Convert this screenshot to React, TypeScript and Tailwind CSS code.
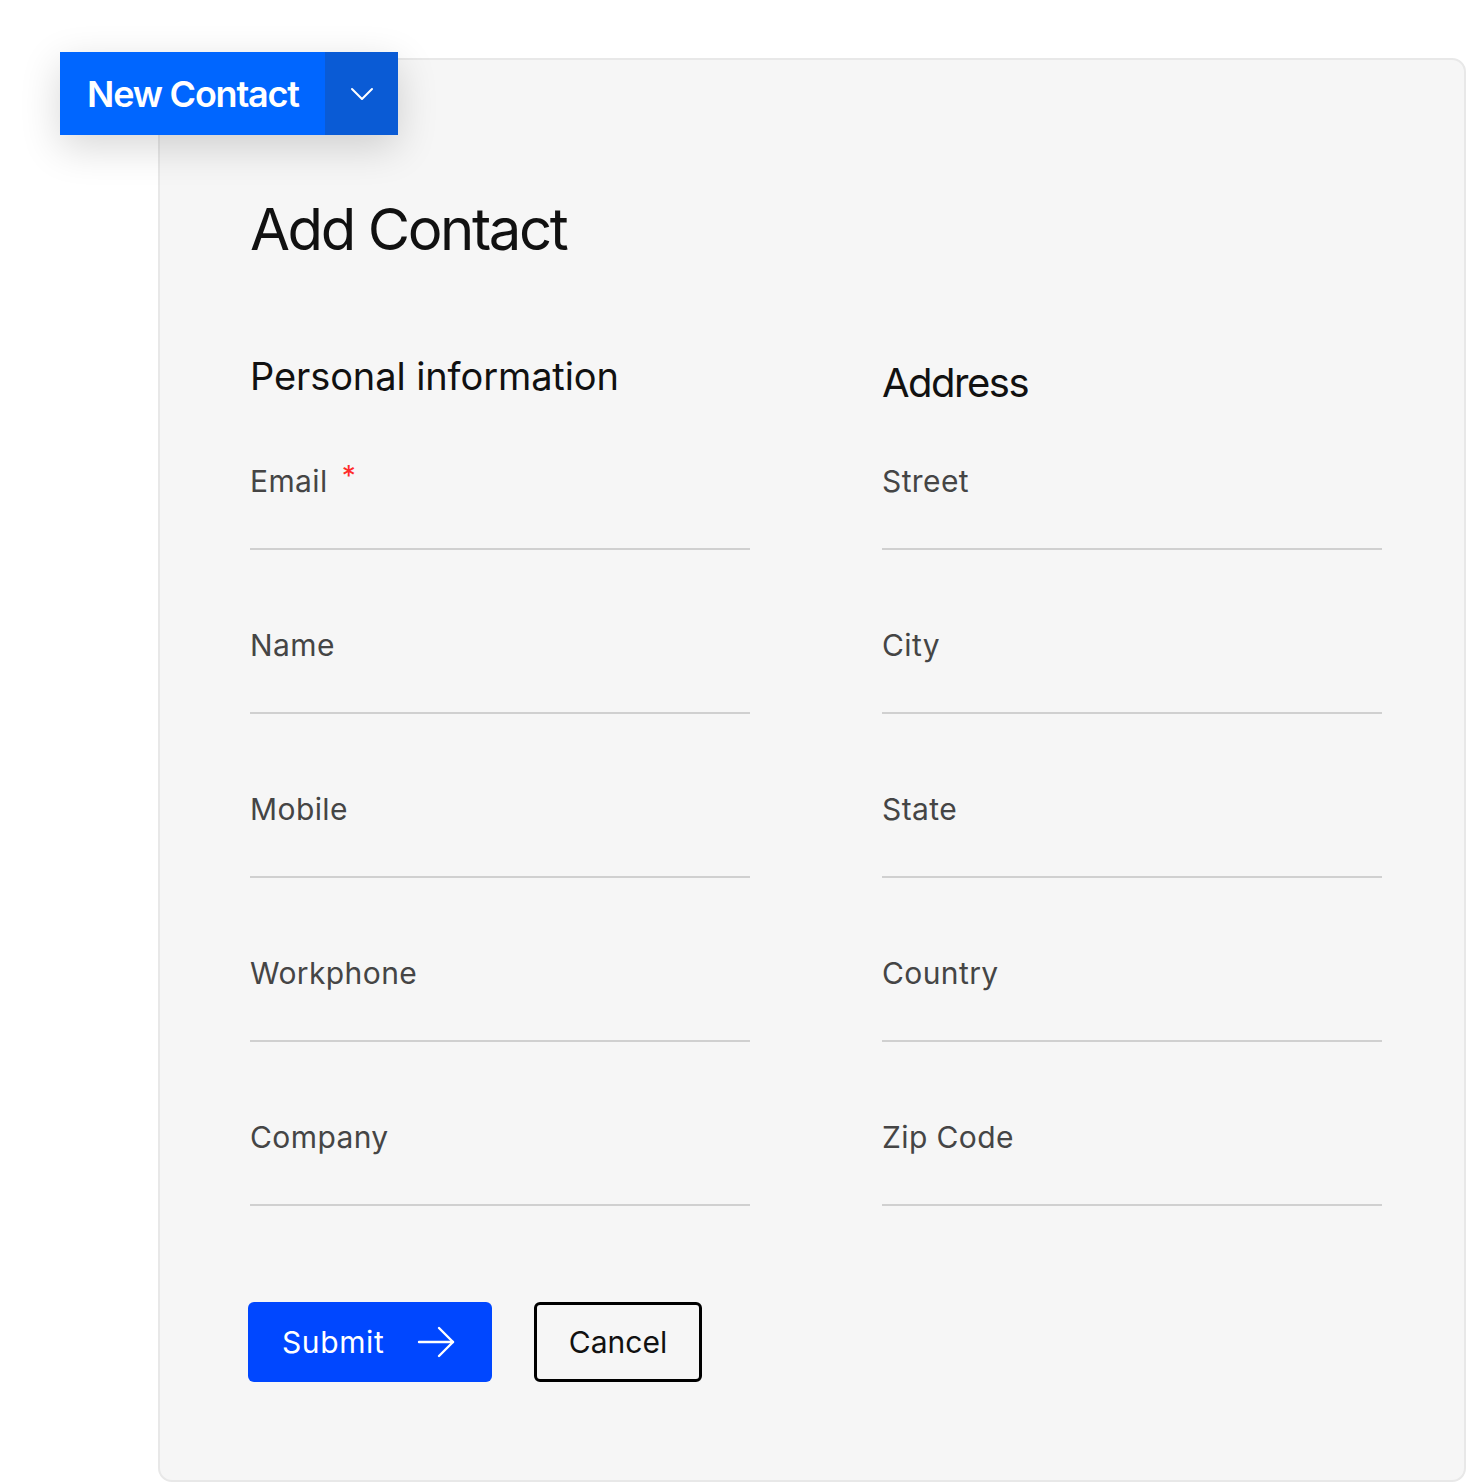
import { ChevronDown } from "lucide-react";

const personal = ["Email", "Name", "Mobile", "Workphone", "Company"];
const address = ["Street", "City", "State", "Country", "Zip Code"];

function Field({ label, required }: { label: string; required?: boolean }) {
  return (
    <div className="flex flex-col">
      <div className="mb-[49px] flex h-[36px] items-start text-[30px] leading-[36px] tracking-[0.4px] text-[#454545]">
        <span>{label}</span>
        {required && <span className="ml-[14px] text-[28px] leading-[26px] text-[#ff2b2b]">*</span>}
      </div>
      <div className="h-[2px] w-full bg-[#d0d0d0]" />
    </div>
  );
}

export default function App() {
  return (
    <div
      className="relative h-[1482px] w-[1466px] overflow-hidden bg-white"
      style={{ fontFamily: "Inter, 'Noto Sans', sans-serif" }}
    >
      <div className="ml-[158px] mt-[58px] h-[1424px] w-[1308px] rounded-[14px] border-2 border-[#e8e8e8] bg-[#f6f6f6] pl-[90px] pt-[134px]">
        <h1 className="text-[58px] leading-[70px] font-normal tracking-[-2.4px] text-[#111]">Add Contact</h1>

        <div className="mt-[89px] grid w-[1132px] grid-cols-2 gap-x-[132px]">
          <div className="flex flex-col">
            <h2 className="mb-[64px] text-[38px] leading-[46px] tracking-[-0.1px] text-[#111]">Personal information</h2>
            <div className="flex flex-col gap-[77px]">
              {personal.map((p, i) => (
                <Field key={p} label={p} required={i === 0} />
              ))}
            </div>
          </div>
          <div className="flex flex-col">
            <h2 className="mb-[56px] mt-[6px] text-[40px] leading-[48px] tracking-[-1.5px] text-[#111]">Address</h2>
            <div className="flex flex-col gap-[77px]">
              {address.map((a) => (
                <Field key={a} label={a} />
              ))}
            </div>
          </div>
        </div>

        <div className="-ml-[2px] mt-[96px] flex items-center gap-[42px]">
          <button className="flex h-[80px] w-[244px] items-center rounded-[6px] bg-[#0047ff] pl-[34px] text-[30px] tracking-[0.6px] text-white">
            <span>Submit</span>
            <svg className="ml-[33px]" width="38" height="32" viewBox="0 0 38 32" fill="none" stroke="currentColor" strokeWidth="2.4" strokeLinecap="round" strokeLinejoin="round">
              <path d="M2 16h34" />
              <path d="M22 2l14 14-14 14" />
            </svg>
          </button>
          <button className="flex h-[80px] w-[168px] items-center justify-center rounded-[6px] border-[3px] border-black text-[30px] text-[#111]">
            Cancel
          </button>
        </div>
      </div>

      <div className="absolute left-[60px] top-[52px] flex h-[83px] w-[338px] shadow-[0_12px_40px_rgba(0,0,0,0.16)]">
        <div className="flex w-[265px] items-center bg-[#0066ff] pl-[27px] text-[36px] font-semibold tracking-[-1.2px] text-white">
          New Contact
        </div>
        <div className="flex flex-1 items-center justify-center bg-[#0a5bd5]">
          <ChevronDown className="h-[40px] w-[40px] text-white" strokeWidth={1.2} />
        </div>
      </div>
    </div>
  );
}
